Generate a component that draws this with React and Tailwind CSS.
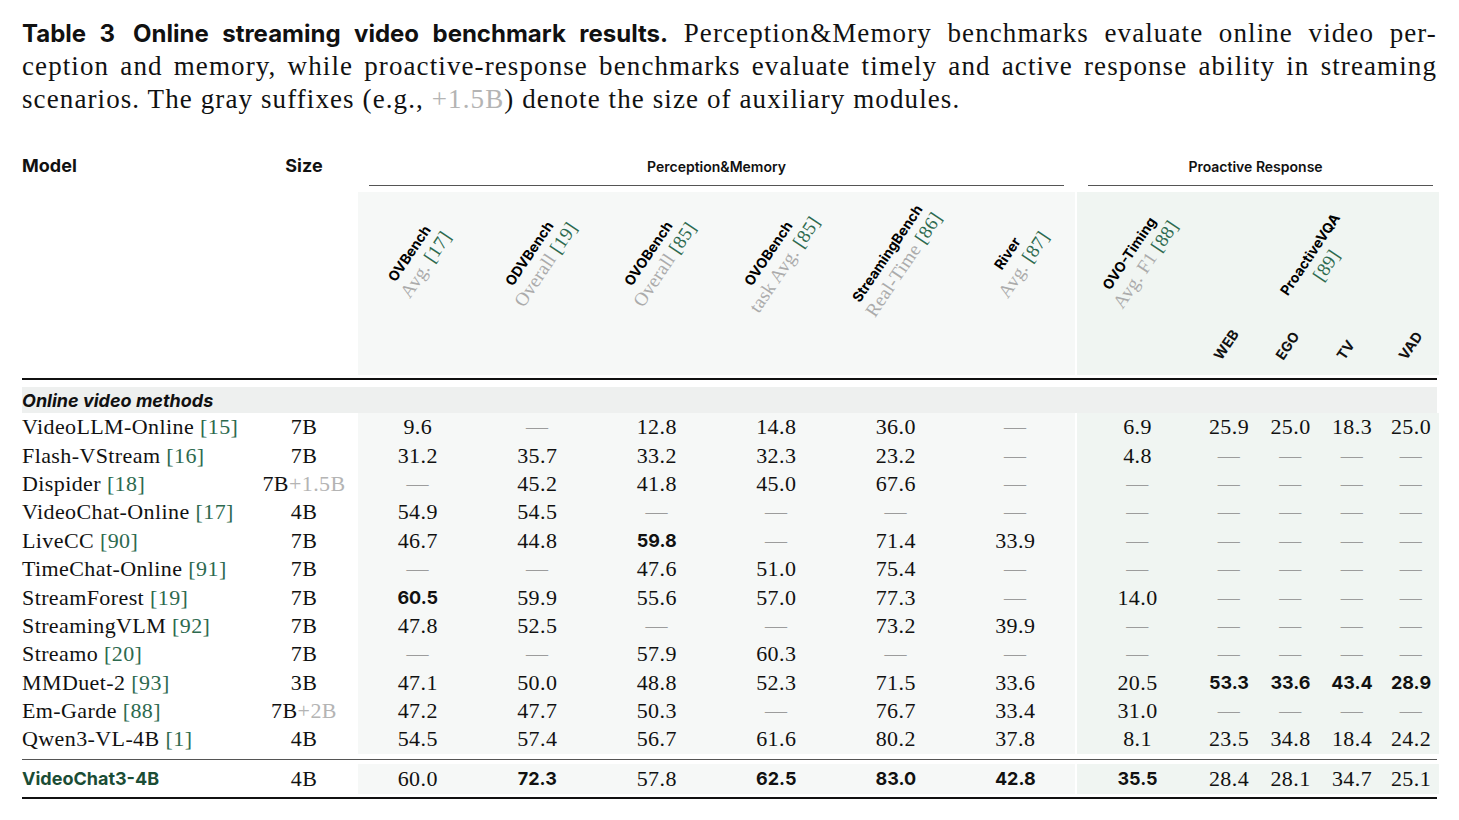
import React from 'react';

const serif = "font-['Liberation_Serif',serif]";
const sans = "font-['Inter',sans-serif]";
const cols = 'grid grid-cols-[228px_108px_repeat(6,119.5px)_2px_121px_62px_61px_62px_56px]';

const perception = [
    ['OVBench', 'Avg.', '17'],
    ['ODVBench', 'Overall', '19'],
    ['OVOBench', 'Overall', '85'],
    ['OVOBench', 'task Avg.', '85'],
    ['StreamingBench', 'Real-Time', '86'],
    ['River', 'Avg.', '87'],
];

const rows = [
    ['VideoLLM-Online', '15', '7B', '', ['9.6', '—', '12.8', '14.8', '36.0', '—', '6.9', '25.9', '25.0', '18.3', '25.0']],
    ['Flash-VStream', '16', '7B', '', ['31.2', '35.7', '33.2', '32.3', '23.2', '—', '4.8', '—', '—', '—', '—']],
    ['Dispider', '18', '7B', '+1.5B', ['—', '45.2', '41.8', '45.0', '67.6', '—', '—', '—', '—', '—', '—']],
    ['VideoChat-Online', '17', '4B', '', ['54.9', '54.5', '—', '—', '—', '—', '—', '—', '—', '—', '—']],
    ['LiveCC', '90', '7B', '', ['46.7', '44.8', '*59.8', '—', '71.4', '33.9', '—', '—', '—', '—', '—']],
    ['TimeChat-Online', '91', '7B', '', ['—', '—', '47.6', '51.0', '75.4', '—', '—', '—', '—', '—', '—']],
    ['StreamForest', '19', '7B', '', ['*60.5', '59.9', '55.6', '57.0', '77.3', '—', '14.0', '—', '—', '—', '—']],
    ['StreamingVLM', '92', '7B', '', ['47.8', '52.5', '—', '—', '73.2', '39.9', '—', '—', '—', '—', '—']],
    ['Streamo', '20', '7B', '', ['—', '—', '57.9', '60.3', '—', '—', '—', '—', '—', '—', '—']],
    ['MMDuet-2', '93', '3B', '', ['47.1', '50.0', '48.8', '52.3', '71.5', '33.6', '20.5', '*53.3', '*33.6', '*43.4', '*28.9']],
    ['Em-Garde', '88', '7B', '+2B', ['47.2', '47.7', '50.3', '—', '76.7', '33.4', '31.0', '—', '—', '—', '—']],
    ['Qwen3-VL-4B', '1', '4B', '', ['54.5', '57.4', '56.7', '61.6', '80.2', '37.8', '8.1', '23.5', '34.8', '18.4', '24.2']],
];

const ours = ['60.0', '*72.3', '57.8', '*62.5', '*83.0', '*42.8', '*35.5', '28.4', '28.1', '34.7', '25.1'];

const Val = ({ v }) => {
    if (v === '—') return <span className="text-[#9c9c9c]">—</span>;
    if (v.startsWith('*')) return <span className={`${sans} font-bold text-[18px] tracking-normal text-[#111]`}>{v.slice(1)}</span>;
    return <span>{v}</span>;
};

const Label = ({ name, sub, cite }) => (
    <div className="rotate-[-56deg] whitespace-nowrap text-center leading-[20px]">
        <div className={`${sans} font-bold text-[14px] text-black`}>{name}</div>
        <div className={`${serif} text-[19px] tracking-[0.3px] text-[#ababab]`}>
            {sub && <span>{sub} </span>}
            <span className="text-[#2d6a4f]">[{cite}]</span>
        </div>
    </div>
);

const ValueCells = ({ vals }) => (
    <>
        {vals.slice(0, 6).map((v, i) => (
            <div key={i} className="bg-[#f6f8f7] flex items-center justify-center"><Val v={v} /></div>
        ))}
        <div />
        {vals.slice(6).map((v, i) => (
            <div key={i} className="bg-[#f0f5f2] flex items-center justify-center"><Val v={v} /></div>
        ))}
    </>
);

const App = () => {
    return (
        <div className={`w-[1459px] h-[820px] bg-white px-[22px] pt-[17px] text-[#111] ${serif}`}>
            {/* Caption */}
            <div className="w-[1415px] text-[27px] leading-[33px] tracking-[1.1px]">
                <div className="text-justify [text-align-last:justify]">
                    <span className={`${sans} font-bold text-[24px] tracking-normal`}>Table 3</span>
                    <span className="inline-block w-[18px]" />
                    <span className={`${sans} font-bold text-[24px] tracking-normal`}>Online streaming video benchmark results.</span>
                    {' '}Perception&amp;Memory benchmarks evaluate online video per-
                </div>
                <div className="text-justify [text-align-last:justify]">
                    ception and memory, while proactive-response benchmarks evaluate timely and active response ability in streaming
                </div>
                <div>
                    scenarios. The gray suffixes (e.g., <span className="text-[#b4b4b4]">+1.5B</span>) denote the size of auxiliary modules.
                </div>
            </div>

            {/* Table */}
            <div className="mt-[32px] w-[1418px] text-[22px]">
                {/* group header */}
                <div className={`${cols} h-[38px]`}>
                    <div className={`${sans} font-bold text-[18px] leading-[24px] pt-[6px]`}>Model</div>
                    <div className={`${sans} font-bold text-[18px] leading-[24px] pt-[6px] text-center`}>Size</div>
                    <div className="col-span-6 flex flex-col justify-end px-[11px]">
                        <div className={`${sans} font-semibold text-[14px] leading-[20px] text-center pb-[8px]`}>Perception&amp;Memory</div>
                        <div className="h-[1.5px] bg-[#555]" />
                    </div>
                    <div />
                    <div className="col-span-5 flex flex-col justify-end pl-[11px] pr-[6px]">
                        <div className={`${sans} font-semibold text-[14px] leading-[20px] text-center pb-[8px] pr-[10px]`}>Proactive Response</div>
                        <div className="h-[1.5px] bg-[#555]" />
                    </div>
                </div>

                {/* rotated headers */}
                <div className={`${cols} h-[183px] mt-[6px]`}>
                    <div />
                    <div />
                    {perception.map(([n, s, c], i) => (
                        <div key={i} className="bg-[#f6f8f7] flex items-center justify-center pb-[50px]">
                            <Label name={n} sub={s} cite={c} />
                        </div>
                    ))}
                    <div />
                    <div className="bg-[#f0f5f2] flex items-center justify-center pb-[50px]">
                        <Label name="OVO-Timing" sub="Avg. F1" cite="88" />
                    </div>
                    <div className="col-span-4 bg-[#f0f5f2] flex flex-col">
                        <div className="flex-1 flex items-center justify-center pt-[2px]">
                            <Label name="ProactiveVQA" sub="" cite="89" />
                        </div>
                        <div className="grid grid-cols-[62px_61px_62px_56px] h-[50px]">
                            {['WEB', 'EGO', 'TV', 'VAD'].map((t) => (
                                <div key={t} className="flex items-end pl-[25px] pb-[13px]">
                                    <span className={`${sans} font-bold text-[14px] leading-[14px] inline-block origin-bottom-left rotate-[-56deg] whitespace-nowrap`}>{t}</span>
                                </div>
                            ))}
                        </div>
                    </div>
                </div>

                <div className="mt-[3px] h-[2px] w-[1415px] bg-[#111]" />

                {/* group row */}
                <div className="mt-[7px] h-[26px] w-[1415px] bg-[#eef0ef] flex items-center">
                    <span className={`${sans} font-bold italic text-[18px]`}>Online video methods</span>
                </div>

                {rows.map(([name, cite, size, extra, vals]) => (
                    <div key={name} className={`${cols} h-[28.4px] leading-[28px] tracking-[0.4px]`}>
                        <div className="flex items-center whitespace-nowrap">
                            {name}&nbsp;<span className="text-[#2d6a4f]">[{cite}]</span>
                        </div>
                        <div className="flex items-center justify-center whitespace-nowrap">
                            {size}{extra && <span className="text-[#b4b4b4]">{extra}</span>}
                        </div>
                        <ValueCells vals={vals} />
                    </div>
                ))}

                <div className="mt-[5px] h-[1.5px] w-[1415px] bg-[#555]" />

                <div className={`${cols} h-[30px] mt-[4px] leading-[28px] tracking-[0.4px]`}>
                    <div className={`${sans} font-bold text-[18px] tracking-normal text-[#1b4d35] flex items-center`}>VideoChat3-4B</div>
                    <div className="flex items-center justify-center">4B</div>
                    <ValueCells vals={ours} />
                </div>

                <div className="mt-[3px] h-[2px] w-[1415px] bg-[#111]" />
            </div>
        </div>
    );
};

export default App;
